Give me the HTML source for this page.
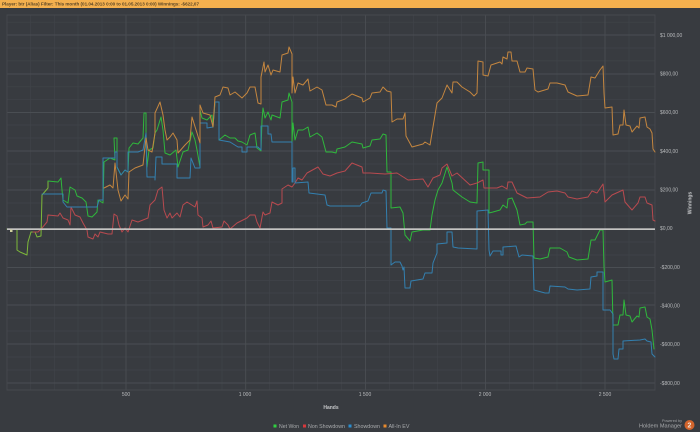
<!DOCTYPE html>
<html>
<head>
<meta charset="utf-8">
<style>
html,body{margin:0;padding:0;width:700px;height:432px;overflow:hidden;background:#383b40}
svg{display:block;filter:blur(0.25px)}
text{font-family:"Liberation Sans",sans-serif}
.l{fill:none;stroke-width:1;stroke-linejoin:round;stroke-linecap:round}
</style>
</head>
<body>
<svg width="700" height="432" viewBox="0 0 700 432" xmlns="http://www.w3.org/2000/svg">
<rect width="700" height="432" fill="#383b40"/>
<rect width="700" height="8" fill="#f4b04e"/>
<text x="2" y="5.6" font-size="4.75" fill="#5a4526" font-weight="bold" textLength="197" lengthAdjust="spacingAndGlyphs">Player: btr (Alias) Filter: This month (01.04.2013 0:00 to 01.05.2013 0:00) Winnings: -$622,07</text>

<g stroke="#404449" stroke-width="0.7" fill="none">
<path d="M7 22.200H655M7 48H655M7 60.900H655M7 86.800H655M7 99.700H655M7 125H655M7 138H655M7 164H655M7 177H655M7 203H655M7 216H655M7 242H655M7 255H655M7 280.500H655M7 293H655M7 318H655M7 331H655M7 357H655M7 370H655"/>
<path d="M30.500 15V390M54.500 15V390M78 15V390M102 15V390M150 15V390M174 15V390M198 15V390M222 15V390M269.500 15V390M293.500 15V390M317.500 15V390M341.500 15V390M389.500 15V390M413.500 15V390M437.500 15V390M461.500 15V390M509.500 15V390M533.500 15V390M557 15V390M581 15V390M629 15V390"/>
</g>
<g stroke="#4a4e53" stroke-width="0.9" fill="none">
<path d="M7 35H655M7 74H655M7 112.500H655M7 151H655M7 190H655M7 267.500H655M7 305H655M7 344H655M7 383H655"/>
<path d="M126 15V390M245.700 15V390M365.500 15V390M485.500 15V390M605 15V390"/>
<path d="M7 15H655V390H7Z" stroke="#46494e"/>
</g>

<polyline class="l" stroke="#7db83a" points="7,229 16,229 17,230 17,250 20,252 27,255 28,242 31,232 35,232 37,237 41,236 42,195 48,188 48,181"/>
<polyline class="l" stroke="#2fb83c" points="48,181 58,182 61,178 62,190 63,200 68,203 70,187 75,190 77,196 82,198 86,202 88,216 92,217 97,212 98,200 103,203 104,162 110,158 115,160 114,138 117,138 117,167 121,175 125,170 128,172 129,148 133,143 138,144 143,138 144,113 146,113 146,133 147,167 149,150 153,148 155,133 157,130 161,117 163,130 165,153 170,155 176,150 178,167 183,152 188,150 192,132 195,140 197,150 200,167 200,110 202,118 207,120 212,115 213,127 215,102 219,102 219,140 225,135 230,138 235,138 238,141 242,142 247,145 250,135 255,133 257,148 261,151 262,120 263,108 265,118 268,112 271,120 272,115 280,118 282,102 288,100 289,93 292,102 292,142 293,123 295,140 298,130 303,130 308,127 310,137 317,133 322,137 326,152 332,152 336,153 337,149 345,147 352,142 362,144 363,148 370,146 372,140 380,139 383,134 386,135 387,172 391,172 391,208 400,207 403,213 405,235 410,241 412,232 423,230 430,230 432,215 435,200 438,190 442,183 447,167 452,183 453,190 462,197 470,202 477,203 478,163 483,162 483,170 489,170 489,213 493,212 500,210 503,205 507,208 508,199 512,198 517,210 520,225 525,224 527,222 533,222 534,258 540,259 548,257 550,248 560,248 567,252 569,257 577,260 588,259 591,240 595,240 600,230 603,230 604,267 605,282 612,280 613,325 618,325 620,315 623,315 624,300 626,315 630,316 632,322 637,316 639,317 640,308 645,307 647,317 650,319 652,330 654,349"/>
<polyline class="l" stroke="#b84a4f" points="33,232 38,232 42,228 47,222 48,215 58,216 60,213 63,218 68,220 70,225 71,207 75,215 80,217 83,223 87,230 88,237 93,239 95,234 98,237 100,232 108,234 112,234 114,214 117,216 119,225 122,232 125,228 128,232 132,220 138,222 148,218 150,205 155,200 158,190 162,187 164,210 167,218 170,213 172,218 177,213 180,217 183,205 187,202 195,207 197,201 198,215 202,218 203,227 208,225 211,221 213,228 222,227 224,221 228,225 230,229 237,223 247,218 250,215 255,215 257,222 260,228 263,212 265,215 270,213 272,202 278,205 282,203 282,189 288,185 292,187 295,183 298,178 302,180 307,173 318,167 323,174 330,176 337,173 345,171 352,163 362,167 363,173 370,173 385,174 397,173 408,180 423,179 428,187 433,178 440,175 442,168 447,164 452,176 457,173 470,185 477,183 483,180 484,188 497,188 502,186 507,189 508,182 512,182 517,193 527,198 540,197 548,192 557,191 565,193 568,197 577,199 588,197 592,191 597,193 603,184 605,202 612,195 623,190 625,202 632,210 638,203 640,197 645,197 647,203 652,205 653,220 655,221"/>
<polyline class="l" stroke="#3380b0" points="42,194 63,194 63,202 67,207 97,207 99,200 103,200 103,158 115,158 115,152 117,152 117,167 121,175 125,170 128,172 128,152 138,152 143,150 146,133 147,177 155,177 155,180 156,157 162,157 162,164 177,164 177,178 190,178 191,158 195,168 200,168 200,123 207,123 207,128 213,127 215,102 219,102 219,140 230,142 238,147 242,147 242,152 247,152 247,147 258,147 261,150 261,126 268,126 268,134 271,134 272,142 292,142 292,182 293,182 293,168 295,168 295,183 308,182 309,193 325,195 327,205 330,206 360,206 362,203 368,201 371,193 382,193 383,190 386,191 387,228 391,228 391,265 395,262 400,262 402,266 403,270 404,267 405,288 410,288 411,281 423,279 425,273 432,273 433,263 437,253 437,244 447,243 447,232 452,232 453,247 458,248 477,249 477,211 488,210 489,250 490,256 493,251 501,251 501,255 503,255 503,247 516,246 519,257 522,255 533,256 534,290 545,293 549,293 550,286 565,287 568,289 577,290 590,289 591,277 597,276 597,272 603,272 603,310 610,310 613,314 613,354 614,359 618,359 619,349 623,349 623,341 640,340 645,339 647,341 651,342 652,354 655,357"/>
<polyline class="l" stroke="#c4863f" points="104,188 110,185 113,188 115,163 118,190 121,201 125,195 128,199 129,172 135,168 143,165 146,138 148,150 152,152 155,133 155,113 160,102 163,115 165,130 167,140 170,137 173,133 177,140 178,153 185,145 190,140 192,117 197,133 200,143 200,105 203,113 210,115 213,127 215,97 220,95 223,87 228,88 230,95 235,92 242,98 247,93 250,87 255,87 258,103 261,104 261,77 264,62 265,72 268,65 271,75 273,70 280,72 282,55 288,53 289,47 292,54 292,93 293,77 295,93 298,83 303,85 308,79 310,91 317,87 322,90 326,105 332,105 336,107 337,102 345,99 352,94 362,98 363,102 370,98 372,93 380,92 383,87 387,91 391,92 392,122 397,119 403,119 405,113 406,136 412,147 423,144 425,142 430,145 433,127 437,103 442,98 447,85 452,93 453,82 457,82 462,87 470,92 474,96 477,93 478,61 483,62 483,75 488,76 491,65 500,62 502,64 503,57 507,59 508,52 511,52 512,61 517,61 520,72 525,72 527,68 533,69 535,90 538,92 548,89 550,83 557,83 565,85 568,92 577,96 588,95 591,77 595,78 600,70 603,66 604,93 605,108 612,107 613,135 618,134 620,125 623,125 624,110 626,125 630,126 632,132 637,126 639,128 640,118 645,117 647,127 650,129 652,133 653,149 655,152"/>

<rect x="7" y="228.300" width="648" height="1.700" fill="#c4c4c2"/>
<rect x="10" y="229.500" width="2.500" height="2.500" fill="#cfd0a0"/>

<g font-size="5" fill="#b8babc" text-anchor="start">
<text x="660" y="37">$1 000,00</text>
<text x="660" y="75.500">$800,00</text>
<text x="660" y="114">$600,00</text>
<text x="660" y="153">$400,00</text>
<text x="660" y="191.500">$200,00</text>
<text x="660" y="230">$0,00</text>
<text x="660" y="269">-$200,00</text>
<text x="660" y="307.500">-$400,00</text>
<text x="660" y="346">-$600,00</text>
<text x="660" y="385">-$800,00</text>
</g>
<g font-size="5" fill="#b8babc" text-anchor="middle">
<text x="126" y="396">500</text>
<text x="245" y="396">1 000</text>
<text x="365" y="396">1 500</text>
<text x="485" y="396">2 000</text>
<text x="605" y="396">2 500</text>
</g>
<text x="331" y="409" font-size="5" font-weight="bold" fill="#c4c6c8" text-anchor="middle">Hands</text>
<text transform="translate(691.500,203) rotate(-90)" font-size="5" font-weight="bold" fill="#c4c6c8" text-anchor="middle">Winnings</text>

<rect x="273.500" y="424.500" width="3" height="3" fill="#2fd03f"/>
<text x="279" y="428" font-size="5" fill="#a8aaac" textLength="20" lengthAdjust="spacingAndGlyphs">Net Won</text>
<rect x="303" y="424.500" width="3" height="3" fill="#d8383c"/>
<text x="308" y="428" font-size="5" fill="#a8aaac" textLength="37" lengthAdjust="spacingAndGlyphs">Non Showdown</text>
<rect x="348.500" y="424.500" width="3" height="3" fill="#2a8ed0"/>
<text x="354" y="428" font-size="5" fill="#a8aaac" textLength="26" lengthAdjust="spacingAndGlyphs">Showdown</text>
<rect x="383.500" y="424.500" width="3" height="3" fill="#e88a2c"/>
<text x="388.500" y="428" font-size="5" fill="#a8aaac" textLength="21" lengthAdjust="spacingAndGlyphs">All-In EV</text>

<text x="682" y="422" font-size="3.800" fill="#a0a2a4" text-anchor="end">Powered by</text>
<text x="639" y="427.500" font-size="5" fill="#a8aaac" textLength="43" lengthAdjust="spacingAndGlyphs">Holdem Manager</text>
<circle cx="689.500" cy="425" r="5" fill="#d2642c"/>
<text x="689.500" y="427.500" font-size="7" font-weight="bold" fill="#f3e4d8" text-anchor="middle">2</text>
</svg>
</body>
</html>
